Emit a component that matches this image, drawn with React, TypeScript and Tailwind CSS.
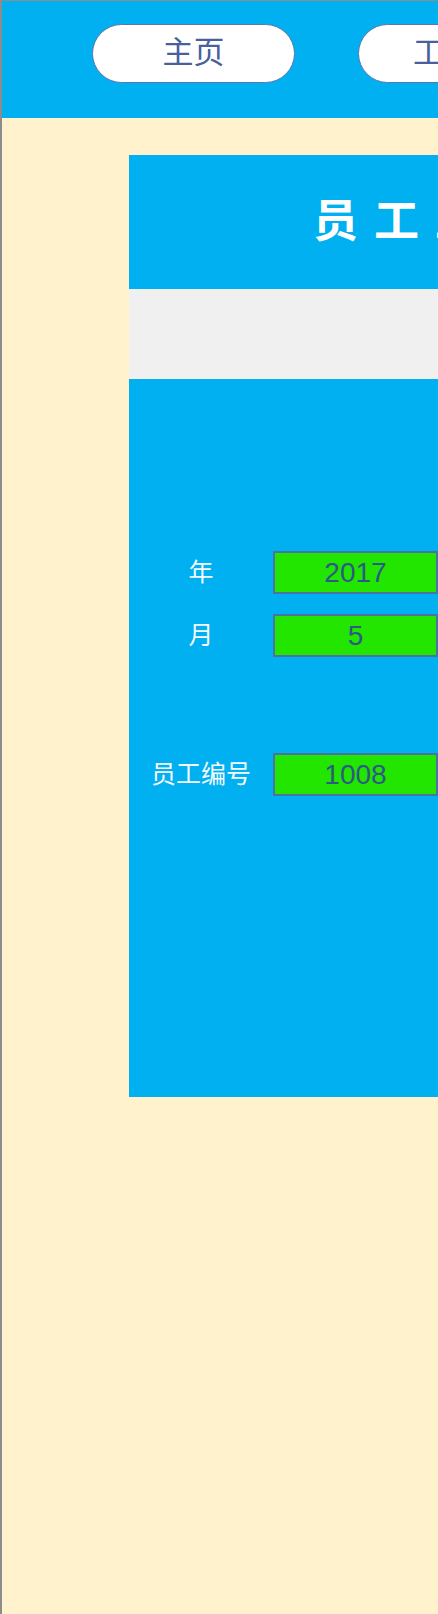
import React from "react";

const font = { fontFamily: '"Liberation Sans", Arial, "Noto Sans CJK SC", sans-serif' };

function NavButton({ label }: { label: string }) {
  return (
    <div className="flex h-[59px] w-[203px] shrink-0 items-center justify-center overflow-hidden rounded-full border border-[#5a76ad] bg-white text-[31px] text-[#4a5f9c]">
      <span className="whitespace-nowrap">{label}</span>
    </div>
  );
}

function Row({ label, value }: { label: string; value: string }) {
  return (
    <div className="flex h-[43px] items-center">
      <div className="w-[144px] shrink-0 text-center text-[25px] text-[#f4faff]">{label}</div>
      <div className="flex h-[43px] w-[165px] shrink-0 items-center justify-center border-2 border-[#4a72a4] bg-[#22e500] text-[28px] leading-none text-[#2c5a86]">
        {value}
      </div>
      <div className="ml-[1px] h-[43px] w-[200px] shrink-0 border-l-2 border-[#8a9a9a]" />
    </div>
  );
}

export default function App() {
  return (
    <div
      className="h-[1614px] w-[438px] overflow-hidden border-l-2 border-t border-[#8c8c8c] bg-[#fff2cc]"
      style={font}
    >
      <div className="flex h-[117px] w-[900px] items-start gap-[63px] bg-[#00b0f0] pl-[90px] pt-[23px]">
        <NavButton label="主页" />
        <NavButton label="工资条" />
      </div>
      <div className="ml-[127px] mt-[37px] w-[700px]">
        <div className="flex h-[134px] items-center bg-[#00b0f0] pl-[184px]">
          <span className="whitespace-nowrap text-[45px] font-bold tracking-[16px] text-white">员工工资条查询</span>
        </div>
        <div className="h-[90px] bg-[#f0f0f0]" />
        <div className="flex h-[718px] flex-col bg-[#00b0f0] pt-[172px]">
          <Row label="年" value="2017" />
          <div className="h-[20px]" />
          <Row label="月" value="5" />
          <div className="h-[96px]" />
          <Row label="员工编号" value="1008" />
        </div>
      </div>
    </div>
  );
}
